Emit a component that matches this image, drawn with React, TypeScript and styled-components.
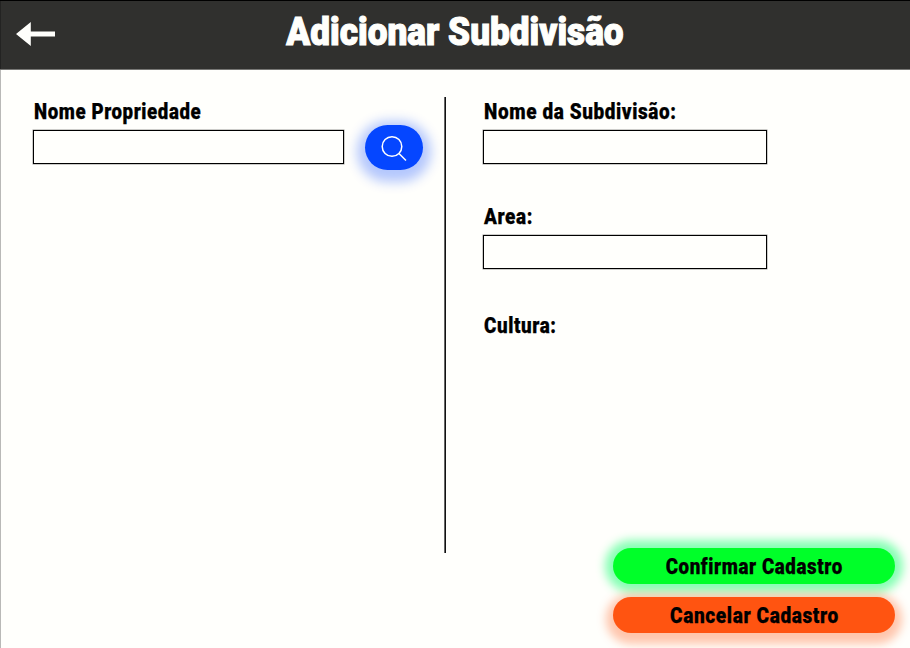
import React from "react";
import styled, { createGlobalStyle } from "styled-components";

const GlobalStyle = createGlobalStyle`
  *, *::before, *::after { box-sizing: border-box; }
  body { margin: 0; background: #fffffc; overflow: hidden; }
`;

const Page = styled.div`
  display: flex;
  flex-direction: column;
  height: 648px;
  background: #fffffc;
  color: #000;
  font-family: Roboto, "Liberation Sans", sans-serif;
  font-variant-ligatures: none;
`;

const Header = styled.header`
  display: grid;
  grid-template-columns: 60px 1fr 60px;
  height: 70px;
  flex: none;
  background: #30302e;
  border-top: 1px solid #000;
  border-bottom: 1px solid #777775;
  box-shadow: inset 1px 0 #232322;
`;

const BackButton = styled.button`
  display: flex;
  margin: 20px 0 0 16px;
  padding: 0;
  width: 40px;
  height: 26px;
  border: 0;
  background: none;
`;

const Title = styled.h1`
  margin: 7px 0 0;
  color: #fffffc;
  font-size: 39px;
  line-height: 48px;
  font-weight: 900;
  text-align: center;
  white-space: nowrap;
  -webkit-text-stroke: 1.1px #fffffc;
`;

const Squeeze = styled.span<{ $x: number; $origin?: string }>`
  display: inline-block;
  white-space: nowrap;
  transform: scaleX(${(p) => p.$x});
  transform-origin: ${(p) => p.$origin ?? "left"} center;
`;

const Main = styled.main`
  display: grid;
  grid-template-columns: 443px 2px 1fr;
  flex: 1;
  border-left: 1px solid #b9b9b7;
`;

const Column = styled.section<{ $left: number }>`
  display: flex;
  flex-direction: column;
  padding: 27px 0 0 ${(p) => p.$left}px;
`;

const Divider = styled.div`
  margin-top: 27px;
  height: 456px;
  background: linear-gradient(90deg, #666 50%, #111 50%);
`;

const Label = styled.label`
  display: block;
  height: 33px;
  padding-left: 1px;
  font-size: 22.5px;
  line-height: 28px;
  font-weight: 900;
  letter-spacing: 0.7px;
  -webkit-text-stroke: 0.25px #000;
`;

const Field = styled.div<{ $gap?: number }>`
  margin-bottom: ${(p) => p.$gap ?? 0}px;
`;

const Input = styled.input<{ $w: number }>`
  display: block;
  width: ${(p) => p.$w}px;
  height: 34px;
  padding: 0 8px;
  border: 1px solid #000;
  border-radius: 0;
  outline: 0;
  background: transparent;
  box-shadow: 0 0 0 0.5px rgba(0, 0, 0, 0.4);
  font: 18px Roboto, sans-serif;
`;

const SearchRow = styled.div`
  display: flex;
  gap: 21px;
`;

const SearchButton = styled.button`
  display: flex;
  align-items: center;
  justify-content: center;
  margin-top: -5px;
  width: 58px;
  height: 45px;
  padding: 0;
  border: 0;
  border-radius: 23px;
  background: #0546ff;
  box-shadow: 0 4px 12px 8px rgba(5, 70, 255, 0.3);
`;

const Actions = styled.div`
  display: flex;
  flex-direction: column;
  gap: 13px;
  margin: auto 15px 15px auto;
`;

const ActionButton = styled.button<{ $bg: string; $glow: string }>`
  width: 282px;
  height: 36px;
  padding: 0;
  border: 0;
  border-radius: 18px;
  background: ${(p) => p.$bg};
  box-shadow: ${(p) => p.$glow};
  color: #000;
  font: 900 22.5px/36px Roboto, sans-serif;
  font-variant-ligatures: none;
  letter-spacing: 0.7px;
  -webkit-text-stroke: 0.25px #000;
`;

export default function App() {
  return (
    <>
      <GlobalStyle />
      <Page>
        <Header>
          <BackButton aria-label="Voltar">
            <svg width="40" height="26" viewBox="0 0 40 26" fill="#fffffc">
              <path d="M0 13 14.8 1v9.5H39v5H14.8V25Z" />
            </svg>
          </BackButton>
          <Title>
            <Squeeze $x={0.902} $origin="center">Adicionar Subdivisão</Squeeze>
          </Title>
        </Header>
        <Main>
          <Column $left={32}>
            <Label><Squeeze $x={0.83}>Nome Propriedade</Squeeze></Label>
            <SearchRow>
              <Input $w={311} aria-label="Nome Propriedade" />
              <SearchButton aria-label="Buscar">
                <svg width="28" height="28" viewBox="0 0 28 28" fill="none" stroke="#fff" strokeWidth="1.5">
                  <circle cx="12" cy="12.5" r="9.8" />
                  <path d="m19 19.5 7 7" />
                </svg>
              </SearchButton>
            </SearchRow>
          </Column>
          <Divider />
          <Column $left={37}>
            <Field $gap={38}>
              <Label><Squeeze $x={0.844}>Nome da Subdivisão:</Squeeze></Label>
              <Input $w={284} aria-label="Nome da Subdivisão" />
            </Field>
            <Field $gap={42}>
              <Label><Squeeze $x={0.842}>Area:</Squeeze></Label>
              <Input $w={284} aria-label="Area" />
            </Field>
            <Label><Squeeze $x={0.838}>Cultura:</Squeeze></Label>
            <Actions>
              <ActionButton $bg="#00ff29" $glow="0 0 10px 8px rgba(0, 255, 100, 0.48)">
                <Squeeze $x={0.834} $origin="center">Confirmar Cadastro</Squeeze>
              </ActionButton>
              <ActionButton $bg="#ff5411" $glow="0 4px 10px 7px rgba(255, 84, 17, 0.34)">
                <Squeeze $x={0.848} $origin="center">Cancelar Cadastro</Squeeze>
              </ActionButton>
            </Actions>
          </Column>
        </Main>
      </Page>
    </>
  );
}
